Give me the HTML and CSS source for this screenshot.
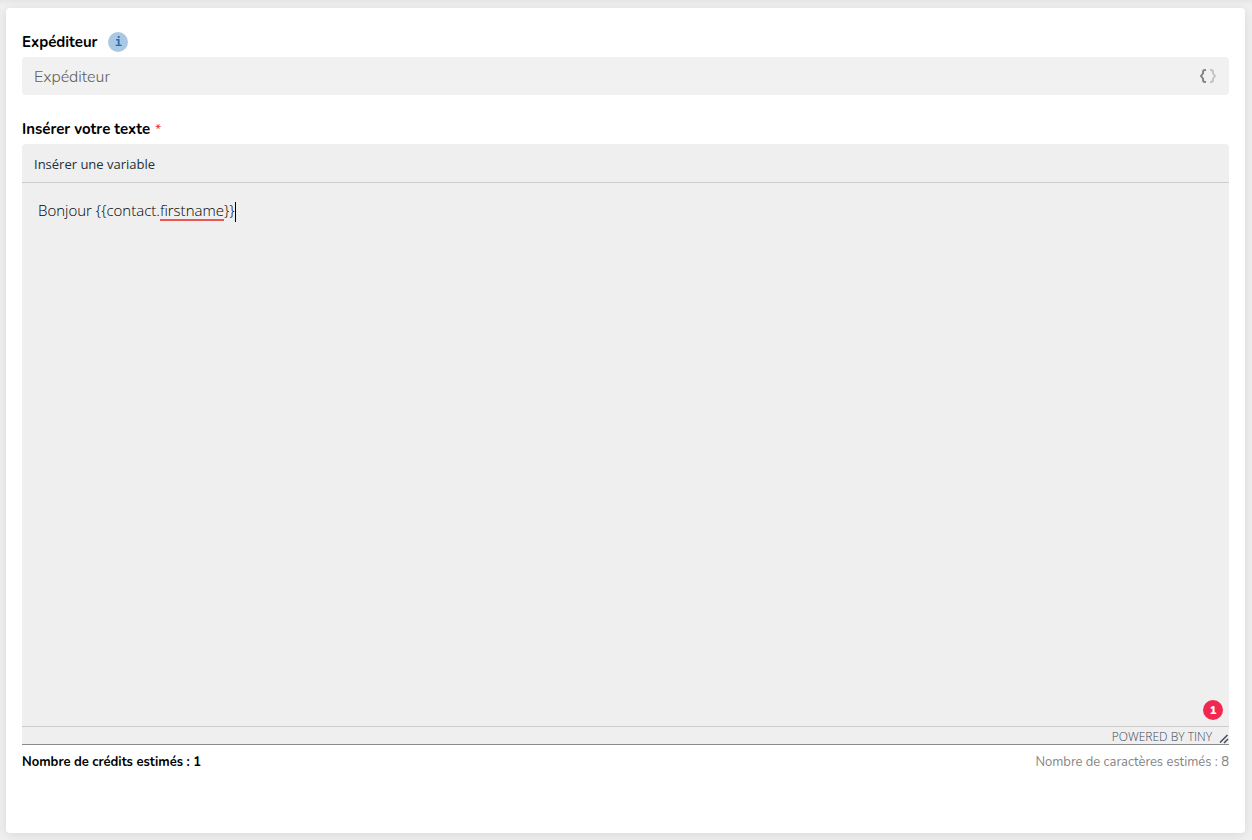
FILE: index.html
```html
<!DOCTYPE html>
<html lang="fr">
  <head>
    <meta charset="UTF-8" />
    <meta name="viewport" content="width=device-width, initial-scale=1.0" />
    <title>SMS</title>
    <link rel="stylesheet" href="styles.css">
  </head>
  <body>
    <form class="card">
      <div class="field">
        <div class="field-label">
          <label for="sender">Expéditeur</label>
          <button type="button" class="info-button">i</button>
        </div>
        <div class="input-group">
          <input type="text" id="sender" class="input" placeholder="Expéditeur" />
          <button type="button" class="variable-button">
            <svg width="18" height="14" viewBox="0 0 18 14" fill="none" stroke-width="2">
              <path d="M7 1H6Q4 1 4 3V4.5L2 7L4 9.5V11Q4 13 6 13H7" stroke="#858585" />
              <path d="M11 1H12Q14 1 14 3V4.5L16 7L14 9.5V11Q14 13 12 13H11" stroke="#c4c4c4" />
            </svg>
          </button>
        </div>
      </div>

      <div class="field editor-field">
        <div class="field-label" id="text-label">
          <span>Insérer votre texte</span>
          <span class="required">*</span>
        </div>
        <div class="editor">
          <div class="toolbar">
            <button type="button" class="toolbar-button">Insérer une variable</button>
          </div>
          <div class="editor-body" contenteditable="true" role="textbox" aria-multiline="true" aria-labelledby="text-label" spellcheck="false">
            <p>Bonjour {{contact.<span class="misspelled">firstname</span>}}<span class="caret"></span></p>
          </div>
          <span class="error-badge">1</span>
          <div class="statusbar">
            <a href="#" class="branding">POWERED BY TINY</a>
            <svg class="resize-handle" width="10" height="10" viewBox="0 0 10 10" fill="none" stroke="#444c59" stroke-width="1.5">
              <path d="M1 8.5L8.5 1M5 9L9 5" />
            </svg>
          </div>
        </div>
        <div class="counters">
          <span class="credits">Nombre de crédits estimés : 1</span>
          <span class="characters">Nombre de caractères estimés : 8</span>
        </div>
      </div>
    </form>
  </body>
</html>
```

FILE: styles.css
```css
* {
  margin: 0;
  padding: 0;
  box-sizing: border-box;
}

body {
  min-height: 100vh;
  display: flex;
  padding: 8px 7px 7px 6px;
  background: #f0f0f0;
  box-shadow: inset 0 4px 4px -2px rgba(0, 0, 0, 0.05);
  color: #000;
  font-family: Nunito, Lato, "Liberation Sans", sans-serif;
}

button {
  border: none;
  background: none;
  font-family: inherit;
  cursor: pointer;
}

.card {
  flex: 1;
  display: flex;
  flex-direction: column;
  gap: 22px;
  padding: 22px 16px 61px;
  background: #fff;
  border-radius: 4px;
  box-shadow: 0 2px 12px rgba(0, 0, 0, 0.1);
}

.field-label {
  display: flex;
  align-items: center;
  gap: 5px;
  height: 24px;
  margin-bottom: 3px;
  font-size: 15px;
  font-weight: 700;
}

.required {
  color: #f5254f;
  font-size: 14px;
  font-weight: 400;
}

.info-button {
  width: 20px;
  height: 20px;
  margin-left: 6px;
  border-radius: 50%;
  background: #abc8e2;
  color: #1f70b8;
  font: bold 12px/20px "DejaVu Sans Mono", monospace;
}

.input-group {
  display: flex;
  align-items: center;
  height: 38px;
  padding: 0 12px;
  background: #f1f1f1;
  border-radius: 4px;
}

.input {
  flex: 1;
  height: 100%;
  padding-top: 2px;
  border: none;
  outline: none;
  background: none;
  font-family: inherit;
  font-size: 16px;
  font-weight: 300;
}

.input::placeholder {
  color: #606060;
}

.variable-button {
  display: flex;
}

.editor-field {
  flex: 1;
  display: flex;
  flex-direction: column;
}

.editor {
  position: relative;
  flex: 1;
  display: flex;
  flex-direction: column;
  border-bottom: 1px solid #8a8a8a;
  border-radius: 4px 4px 0 0;
  background: #efefef;
  font-family: "Segoe UI", "Open Sans", "Noto Sans", sans-serif;
}

.toolbar {
  display: flex;
  height: 39px;
  border-bottom: 1px solid #ccc;
}

.toolbar-button {
  padding: 2px 12px 0;
  color: #222f3e;
  font-size: 13px;
}

.editor-body {
  flex: 1;
  padding: 15px 16px;
  outline: none;
  font-size: 15px;
  font-weight: 300;
  line-height: 24px;
}

.misspelled {
  display: inline-block;
  padding-bottom: 1px;
  border-bottom: 2px solid #eb5757;
  line-height: 1;
}

.caret {
  display: inline-block;
  height: 20px;
  border-left: 1px solid #000;
  vertical-align: middle;
}

.error-badge {
  position: absolute;
  right: 6px;
  bottom: 24px;
  width: 20px;
  height: 20px;
  border-radius: 50%;
  background: #f22750;
  color: #fff;
  font-family: Nunito, Lato, sans-serif;
  font-size: 12px;
  font-weight: 800;
  line-height: 20px;
  text-align: center;
}

.statusbar {
  display: flex;
  justify-content: flex-end;
  align-items: center;
  gap: 7px;
  height: 18px;
  border-top: 1px solid #ccc;
}

.branding {
  padding-top: 2px;
  color: #3c4655;
  font-size: 12px;
  font-weight: 300;
  text-decoration: none;
}

.resize-handle {
  align-self: flex-end;
}

.counters {
  display: flex;
  justify-content: space-between;
  margin-top: 7px;
  font-size: 13px;
  line-height: 20px;
}

.credits {
  font-weight: 700;
}

.characters {
  color: #858585;
}
```
